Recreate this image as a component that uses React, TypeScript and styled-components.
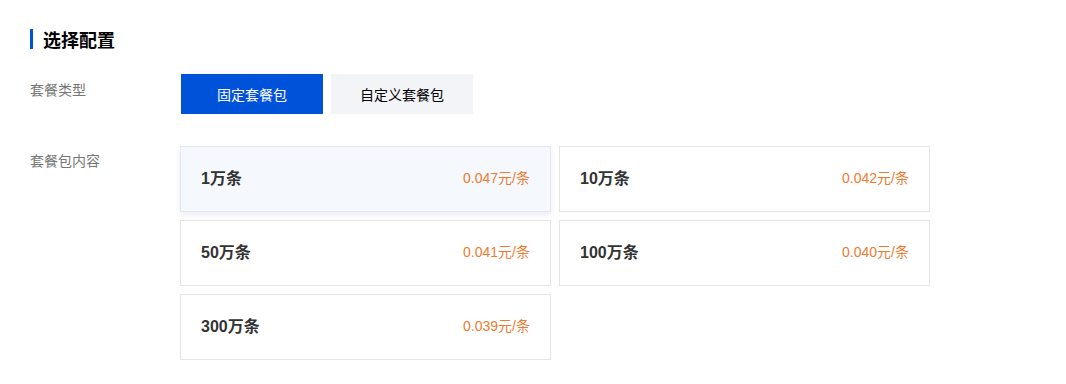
import styled, { createGlobalStyle } from "styled-components";

const GlobalStyle = createGlobalStyle`
  body {
    margin: 0;
    background: #fff;
    font-family: "Liberation Sans", "Noto Sans CJK SC", sans-serif;
  }
`;

const Page = styled.div`
  padding: 29px 30px 0 30px;
`;

const SectionTitle = styled.h2`
  margin: 0 0 25px 0;
  height: 20px;
  display: flex;
  align-items: center;
  font-size: 18px;
  font-weight: 700;
  color: #000;
  &::before {
    content: "";
    width: 3px;
    height: 20px;
    background: #0052d9;
    margin-right: 10px;
  }
`;

const FormRow = styled.div<{ $gap?: number }>`
  display: flex;
  margin-bottom: ${(p) => p.$gap ?? 0}px;
`;

const Label = styled.div<{ $top?: number }>`
  width: 150px;
  flex: none;
  font-size: 14px;
  color: #777;
  line-height: 20px;
  padding-top: ${(p) => p.$top ?? 6}px;
`;

const ButtonGroup = styled.div`
  display: flex;
  gap: 8px;
  padding-left: 1px;
`;

const TypeButton = styled.button<{ $active?: boolean }>`
  width: 142px;
  height: 40px;
  border: none;
  font-family: inherit;
  font-size: 14px;
  cursor: pointer;
  background: ${(p) => (p.$active ? "#0052d9" : "#f3f4f7")};
  color: ${(p) => (p.$active ? "#fff" : "#000")};
`;

const CardGrid = styled.div`
  display: grid;
  grid-template-columns: repeat(2, 371px);
  gap: 8px;
`;

const Card = styled.div<{ $active?: boolean }>`
  box-sizing: border-box;
  height: 66px;
  padding: 0 20px 4px 20px;
  display: flex;
  align-items: center;
  justify-content: space-between;
  border: 1px solid ${(p) => (p.$active ? "#e3e8f0" : "#e5e5e5")};
  background: ${(p) => (p.$active ? "#f5f8fc" : "#fff")};
  box-shadow: ${(p) => (p.$active ? "0 3px 6px rgba(0, 30, 80, 0.08)" : "none")};
  cursor: pointer;
`;

const Amount = styled.span`
  font-size: 16px;
  font-weight: 700;
  color: #333;
`;

const Price = styled.span`
  font-size: 14px;
  color: #ed7b2f;
`;

const packages = [
  { amount: "1万条", price: "0.047元/条" },
  { amount: "10万条", price: "0.042元/条" },
  { amount: "50万条", price: "0.041元/条" },
  { amount: "100万条", price: "0.040元/条" },
  { amount: "300万条", price: "0.039元/条" },
];

export default function App() {
  return (
    <>
      <GlobalStyle />
      <Page>
        <SectionTitle>选择配置</SectionTitle>
        <FormRow $gap={32}>
          <Label $top={6}>套餐类型</Label>
          <ButtonGroup>
            <TypeButton $active>固定套餐包</TypeButton>
            <TypeButton>自定义套餐包</TypeButton>
          </ButtonGroup>
        </FormRow>
        <FormRow>
          <Label $top={5}>套餐包内容</Label>
          <CardGrid>
            {packages.map((p, i) => (
              <Card key={p.amount} $active={i === 0}>
                <Amount>{p.amount}</Amount>
                <Price>{p.price}</Price>
              </Card>
            ))}
          </CardGrid>
        </FormRow>
      </Page>
    </>
  );
}
